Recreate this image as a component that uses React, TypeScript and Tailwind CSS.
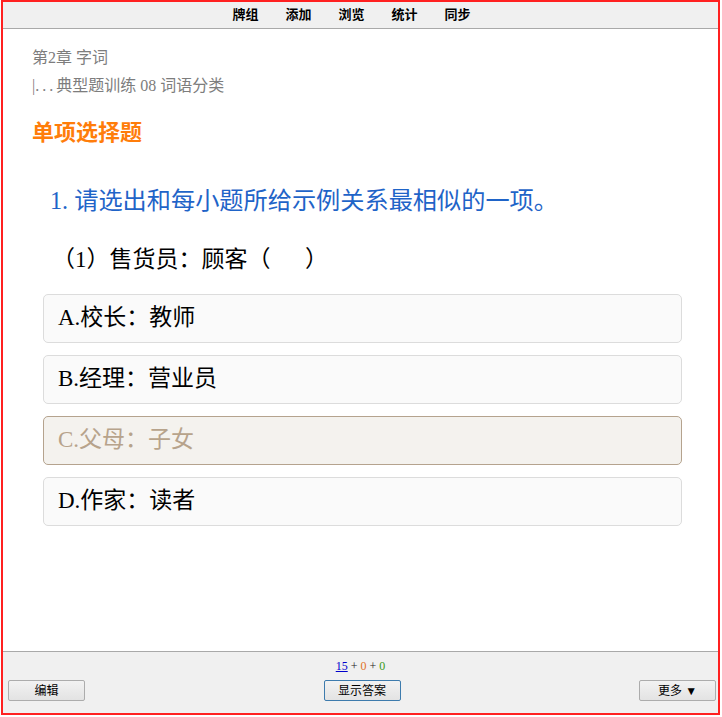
import React from "react";

const nav = ["牌组", "添加", "浏览", "统计", "同步"];

const options = [
  { label: "A.校长：教师", picked: false },
  { label: "B.经理：营业员", picked: false },
  { label: "C.父母：子女", picked: true },
  { label: "D.作家：读者", picked: false },
];

const cjk = "font-['Liberation_Serif','Noto_Sans_CJK_SC',serif]";
const ui = "font-['Liberation_Sans','Noto_Sans_CJK_SC',sans-serif]";

function Btn({ children, focus }: { children: React.ReactNode; focus?: boolean }) {
  return (
    <button
      className={`h-[21px] w-[77px] rounded-[2px] border bg-gradient-to-b from-[#f2f2f2] to-[#e3e3e3] text-[12px] leading-none text-black ${ui} ${
        focus ? "border-[#3d7bad]" : "border-[#acacac]"
      }`}
    >
      {children}
    </button>
  );
}

export default function App() {
  return (
    <div className="w-[722px] h-[717px] bg-white">
      <div className="ml-px w-[719px] h-[715px] border-[2.5px] border-[#ff2020] flex flex-col">

        {/* Top nav */}
        <div className="h-[27px] shrink-0 bg-[#f0f0f0] border-b border-[#a9a9a9] flex items-center justify-center gap-[27px] pr-[18px]">
          {nav.map((n) => (
            <span key={n} className={`text-[13px] font-bold text-black ${ui}`}>
              {n}
            </span>
          ))}
        </div>

        {/* Card */}
        <div className="flex-1 flex flex-col pl-[29px] pt-[15px]">
          <div className={`text-[16px] leading-[28px] text-[#7d7d7d] ${cjk}`}>第2章 字词</div>
          <div className={`text-[16px] leading-[28px] text-[#7d7d7d] ${cjk}`}>
            |<span className="tracking-[3px]">...</span>典型题训练 08 词语分类
          </div>

          <div className={`mt-[17px] text-[22px] leading-[32px] font-bold text-[#ff7d0a] ${ui}`}>单项选择题</div>

          <div className={`mt-[35px] pl-[18px] text-[24.2px] leading-[34px] text-[#1f64c8] ${cjk}`}>
            1. 请选出和每小题所给示例关系最相似的一项。
          </div>

          <div className={`mt-[25px] pl-[20px] text-[23px] leading-[34px] text-black ${cjk}`}>
            （1）售货员：顾客（&nbsp;&nbsp;&nbsp;&nbsp;&nbsp;&nbsp;）
          </div>

          <div className="mt-[17px] ml-[11px] mr-[36px] flex flex-col gap-[12px]">
            {options.map((o) => (
              <div
                key={o.label}
                className={`h-[49px] rounded-[5px] border flex items-center pl-[14px] text-[23px] ${cjk} ${
                  o.picked
                    ? "bg-[#f4f2ee] border-[#b5a38e] text-[#b7a38b]"
                    : "bg-[#fafafa] border-[#dcdcdc] text-black"
                }`}
              >
                {o.label}
              </div>
            ))}
          </div>
        </div>

        {/* Bottom bar */}
        <div className="h-[62px] shrink-0 bg-[#f0f0f0] border-t border-[#a9a9a9] flex flex-col">
          <div className="pt-[7px] h-[28px] text-center text-[12px] leading-[14px] font-['Liberation_Serif',serif]">
            <span className="text-[#0000cc] underline">15</span>
            <span className="text-[#222]"> + </span>
            <span className="text-[#e0701f]">0</span>
            <span className="text-[#222]"> + </span>
            <span className="text-[#3a9a18]">0</span>
          </div>
          <div className="flex items-center justify-between pl-[5px] pr-[2px]">
            <Btn>编辑</Btn>
            <Btn focus>显示答案</Btn>
            <Btn>更多 ▼</Btn>
          </div>
        </div>

      </div>
    </div>
  );
}
